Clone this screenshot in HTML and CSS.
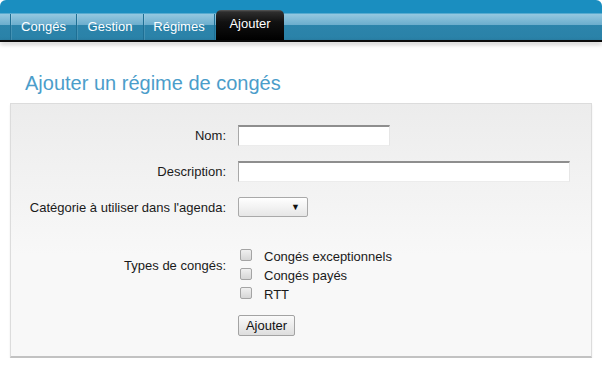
FILE: index.html
```html
<!DOCTYPE html>
<html lang="fr">
<head>
<meta charset="utf-8">
<title>Ajouter un régime de congés</title>
<link rel="stylesheet" href="styles.css">
</head>
<body>
<header class="topbar">
  <nav class="nav">
    <a class="tab w1">Congés</a>
    <a class="tab w2">Gestion</a>
    <a class="tab w3">Régimes</a>
    <a class="tab active">Ajouter</a>
  </nav>
</header>
<div class="rule"></div>

<h1 class="title">Ajouter un régime de congés</h1>

<form class="panel">
  <div class="row">
    <label class="lbl">Nom:</label>
    <input class="field short" type="text">
  </div>
  <div class="row">
    <label class="lbl">Description:</label>
    <input class="field long" type="text">
  </div>
  <div class="row">
    <label class="lbl">Catégorie à utiliser dans l'agenda:</label>
    <div class="select"><span class="arrow">▼</span></div>
  </div>
  <div class="row top">
    <label class="lbl types">Types de congés:</label>
    <div class="checks">
      <div class="check"><input type="checkbox" class="box"><span>Congés exceptionnels</span></div>
      <div class="check"><input type="checkbox" class="box"><span>Congés payés</span></div>
      <div class="check"><input type="checkbox" class="box"><span>RTT</span></div>
    </div>
  </div>
  <div class="row btnrow">
    <span class="lbl"></span>
    <button type="button" class="btn">Ajouter</button>
  </div>
</form>
</body>
</html>
```

FILE: styles.css
```css
* { box-sizing: border-box; }

body {
  margin: 0;
  background: #ffffff;
  font-family: "Liberation Sans", Arial, sans-serif;
  font-size: 13px;
  color: #1a1a1a;
}

.topbar {
  height: 40px;
  border-radius: 6px 6px 0 0;
  background: linear-gradient(to bottom,
    #1a8ec0 0px, #1a8ec0 13px,
    #93c8e0 14px, #6cadcd 25px,
    #2c84ab 25px, #2a82a8 40px);
  display: flex;
  flex-direction: column;
  justify-content: flex-end;
}

.nav {
  display: flex;
  height: 26px;
  padding-left: 10px;
}

.tab {
  display: block;
  width: 66px;
  height: 26px;
  line-height: 26px;
  text-align: center;
  color: #ffffff;
  border-left: 1px solid #1e6f94;
  box-shadow: inset 1px 0 0 rgba(255,255,255,0.12);
}
.tab.w2 { width: 67px; }
.tab.w3 { width: 72px; border-right: 1px solid #1e6f94; }

.tab.active {
  width: 68px;
  height: 30px;
  margin-top: -4px;
  padding-top: 1px;
  line-height: 26px;
  border: 0;
  border-radius: 5px 5px 0 0;
  background: linear-gradient(to bottom, #5a5a5a 0px, #2e2e2e 2px, #111111 12px, #000000 30px);
  box-shadow: none;
  margin-left: 1px;
}

.rule {
  height: 2px;
  background: #0c0c0c;
  box-shadow: 0 2px 4px rgba(0,0,0,0.35);
}

.title {
  margin: 29px 0 8px 25px;
  font-size: 20px;
  line-height: 24px;
  font-weight: normal;
  color: #4b9dca;
}

.panel {
  margin: 0 10px;
  padding: 21px 0 20px 0;
  border: 1px solid #dcdcdc;
  border-bottom: 2px solid #c2c2c2;
  background: linear-gradient(to bottom, #ececec, #f8f8f8 60%, #f8f8f8);
  box-shadow: 0 2px 2px rgba(0,0,0,0.08);
}

.row {
  display: flex;
  align-items: center;
  margin-top: 15px;
}
.row:first-child { margin-top: 0; }
.row.top { align-items: flex-start; margin-top: 30px; }
.row.btnrow { margin-top: 11px; }

.lbl {
  width: 215px;
  margin-right: 12px;
  text-align: right;
  line-height: 15px;
  color: #1a1a1a;
}
.lbl.types { padding-top: 11px; }

.field {
  height: 21px;
  border: 1px solid;
  border-color: #8e8e8e #e6e6e6 #ececec #a8a8a8;
  border-top-width: 2px;
  background: #ffffff;
  padding: 0;
  margin: 0;
}
.field.short { width: 152px; }
.field.long { width: 332px; }

.select {
  width: 70px;
  height: 20px;
  border: 1px solid #a9a9a9;
  border-radius: 2px;
  background: linear-gradient(to bottom, #ffffff, #e6e6e6);
  display: flex;
  justify-content: flex-end;
  align-items: center;
  padding-right: 7px;
}
.arrow {
  font-size: 9px;
  color: #111;
}

.checks {
  display: flex;
  flex-direction: column;
}
.check {
  display: flex;
  align-items: center;
  height: 19px;
}
.box {
  -webkit-appearance: none;
  appearance: none;
  width: 12px;
  height: 12px;
  margin: 0 12px 0 2px;
  border: 1px solid #a4a4a4;
  border-radius: 2px;
  background: linear-gradient(to bottom, #f0f0f0, #d6d6d6);
  position: relative;
  top: -2px;
}
.check span { line-height: 15px; }

.btn {
  width: 57px;
  height: 21px;
  padding: 0;
  margin: 0;
  border: 1px solid #a3a3a3;
  border-radius: 2px;
  background: linear-gradient(to bottom, #fafafa, #dedede);
  font-family: "Liberation Sans", Arial, sans-serif;
  font-size: 13px;
  color: #111;
}
```
